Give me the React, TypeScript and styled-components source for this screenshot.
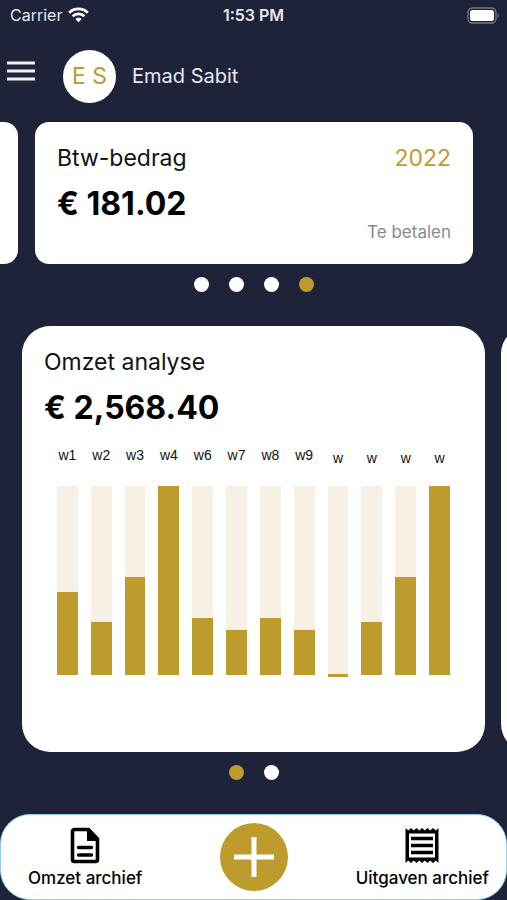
import React from "react";
import styled, { createGlobalStyle, css } from "styled-components";

const navy = "#1f233a";
const gold = "#be9b2d";
const cream = "#f7f0e5";

const GlobalStyle = createGlobalStyle`
  *, *::before, *::after { box-sizing: border-box; }
  body {
    margin: 0;
    background: ${navy};
    font-family: Inter, "Liberation Sans", sans-serif;
    color: #111;
  }
  button { font: inherit; padding: 0; border: 0; background: none; cursor: pointer; }
  h2, p, ul { margin: 0; padding: 0; }
`;

const Screen = styled.div`
  min-height: 100vh;
  display: flex;
  flex-direction: column;
  overflow: hidden;
`;

const StatusBar = styled.div`
  display: grid;
  grid-template-columns: 1fr auto 1fr;
  align-items: center;
  height: 30px;
  padding: 0 8px;
  font-size: 16px;
  line-height: 20px;
  color: #e6e8f0;
`;

const Carrier = styled.div`
  display: flex;
  align-items: center;
  gap: 6px;
  padding-left: 2px;
`;

const Clock = styled.time`
  font-weight: 600;
`;

const Battery = styled.svg`
  justify-self: end;
`;

const Header = styled.header`
  display: flex;
  align-items: center;
  height: 54px;
  margin-top: 19px;
  padding: 0 7px;
`;

const MenuButton = styled.button`
  display: flex;
  align-items: center;
  align-self: flex-start;
  height: 44px;
  margin-right: 28px;
`;

const Avatar = styled.div`
  display: grid;
  place-items: center;
  width: 53px;
  height: 53px;
  margin-right: 16px;
  border-radius: 50%;
  background: #fff;
  color: ${gold};
  font-size: 23px;
`;

const UserName = styled.span`
  color: #e6e8f0;
  font-size: 20px;
`;

const Main = styled.main`
  display: flex;
  flex-direction: column;
  gap: 21px;
  margin-top: 19px;
`;

const Carousel = styled.div<{ $end?: boolean }>`
  display: flex;
  gap: ${(p) => (p.$end ? 17 : 16)}px;
  justify-content: ${(p) => (p.$end ? "flex-end" : "flex-start")};
  padding: ${(p) => (p.$end ? "0 34px 0 35px" : "0 22px")};
  overflow: hidden;
`;

const cardBase = css`
  flex: 0 0 100%;
  background: #fff;
`;

const SummaryCard = styled.article`
  ${cardBase}
  display: flex;
  flex-direction: column;
  min-height: 142px;
  padding: 20px 22px 23px;
  border-radius: 14px;
`;

const ChartCard = styled.article`
  ${cardBase}
  min-height: 426px;
  padding: 20px 22px;
  border-radius: 28px;
`;

const CardHead = styled.div`
  display: flex;
  justify-content: space-between;
`;

const CardTitle = styled.h2`
  font-size: 23px;
  font-weight: 400;
  line-height: 32px;
`;

const Year = styled.span`
  color: ${gold};
  font-size: 23px;
  line-height: 32px;
`;

const Amount = styled.p`
  margin-top: 11px;
  font-size: 32px;
  font-weight: 700;
  line-height: 38px;
  color: #000;
`;

const Note = styled.p`
  align-self: flex-end;
  margin-top: auto;
  color: #8a8a8a;
  font-size: 17px;
  line-height: 18px;
`;

const Dots = styled.div`
  display: flex;
  justify-content: center;
  gap: 20px;
  padding: 13px 0;
`;

const Dot = styled.button<{ $active?: boolean }>`
  width: 15px;
  height: 15px;
  border-radius: 50%;
  background: ${(p) => (p.$active ? gold : "#fff")};
`;

const Chart = styled.ul`
  display: flex;
  gap: 13px;
  margin-top: 15px;
  padding: 0 13px;
  list-style: none;
`;

const Week = styled.li`
  flex: 1 1 0;
  min-width: 0;
  display: flex;
  flex-direction: column;
  align-items: center;
`;

const WeekLabel = styled.span<{ $low: boolean }>`
  height: 44px;
  padding-top: ${(p) => (p.$low ? 6 : 3)}px;
  font-family: "Liberation Sans", Arial, sans-serif;
  font-size: 14px;
  line-height: 20px;
`;

const Track = styled.div`
  width: 100%;
  height: 189px;
  display: flex;
  flex-direction: column;
  justify-content: flex-end;
  background: ${cream};
`;

const Fill = styled.div<{ $value: number }>`
  flex: none;
  height: ${(p) => (p.$value ? `${p.$value}%` : "3px")};
  margin-bottom: ${(p) => (p.$value ? 0 : -2)}px;
  background: ${gold};
`;

const BottomBar = styled.nav`
  display: grid;
  grid-template-columns: 1fr auto 1fr;
  align-items: center;
  min-height: 86px;
  margin-top: auto;
  padding: 0 17px;
  border: 1px solid #8fd0ea;
  border-radius: 30px;
  background: #fff;
`;

const NavLink = styled.a<{ $end?: boolean }>`
  display: flex;
  flex-direction: column;
  align-items: center;
  gap: 2px;
  justify-self: ${(p) => (p.$end ? "end" : "start")};
  padding: 2px 0 0 ${(p) => (p.$end ? 0 : 10)}px;
  color: #000;
  font-size: 17px;
  font-weight: 500;
  line-height: 24px;
  white-space: nowrap;
  text-decoration: none;
`;

const AddButton = styled.button`
  display: grid;
  place-items: center;
  width: 68px;
  height: 68px;
  border-radius: 50%;
  background: ${gold};
`;

const weeks = [
  { label: "w1", value: 44 },
  { label: "w2", value: 28 },
  { label: "w3", value: 52 },
  { label: "w4", value: 100 },
  { label: "w6", value: 30 },
  { label: "w7", value: 24 },
  { label: "w8", value: 30 },
  { label: "w9", value: 24 },
  { label: "w", value: 0 },
  { label: "w", value: 28 },
  { label: "w", value: 52 },
  { label: "w", value: 100 },
];

function WifiIcon() {
  return (
    <svg width="21" height="16" viewBox="0 0 21 16" fill="none" stroke="#fff" strokeWidth="2.7" aria-hidden="true">
      <path d="M1.2 5.7C6.4.6 14.6.6 19.8 5.7" />
      <path d="M4.6 9.3C7.9 6.1 13.1 6.1 16.4 9.3" />
      <path d="M10.5 15.3 7.3 12.1C9 10.4 12 10.4 13.7 12.1Z" fill="#fff" stroke="none" />
    </svg>
  );
}

function BatteryIcon() {
  return (
    <Battery width="33" height="17" viewBox="0 0 33 17" aria-hidden="true">
      <rect x="2" y="1" width="28" height="15" rx="4.5" fill="none" stroke="#777b8c" strokeWidth="1.3" />
      <rect x="4" y="3" width="24" height="11" rx="2.5" fill="#fff" />
      <path d="M31.500 6v5c1.600-.7 1.600-4.300 0-5Z" fill="#777b8c" />
    </Battery>
  );
}

function DocumentIcon() {
  return (
    <svg width="30" height="37" viewBox="0 0 30 37" aria-hidden="true">
      <path d="M4 2.5h14.5L27.5 12v20.5a2 2 0 0 1-2 2H4.5a2 2 0 0 1-2-2v-28a2 2 0 0 1 2-2Z" fill="none" stroke="#000" strokeWidth="3.6" />
      <path d="M17 2v12h11.5v-3L19 2Z" fill="#000" />
      <path d="M8.5 20.5h13M8.5 28h13" stroke="#000" strokeWidth="3.4" strokeLinecap="round" />
    </svg>
  );
}

function ReceiptIcon() {
  return (
    <svg width="34" height="37" viewBox="0 0 34 37" aria-hidden="true">
      <path
        fillRule="evenodd"
        d="M.5 1l2.75 2.5L6 1l2.75 2.5L11.5 1l2.75 2.5L17 1l2.75 2.5L22.5 1l2.75 2.5L28 1l2.75 2.5L33.5 1v35l-2.75-2.5L28 36l-2.75-2.5L22.5 36l-2.75-2.5L17 36l-2.75-2.5L11.5 36l-2.75-2.5L6 36l-2.75-2.5L.5 36ZM4 6.5v24h26v-24Z"
      />
      <path d="M6 11.5h22M6 18.5h22M6 25.5h22" stroke="#000" strokeWidth="3.4" />
    </svg>
  );
}

function Pager({ count, active, label }: { count: number; active: number; label: string }) {
  return (
    <Dots>
      {Array.from({ length: count }, (_, i) => (
        <Dot key={i} $active={i === active} aria-label={`${label} ${i + 1}`} />
      ))}
    </Dots>
  );
}

export default function App() {
  return (
    <>
      <GlobalStyle />
      <Screen>
        <StatusBar>
          <Carrier>
            Carrier
            <WifiIcon />
          </Carrier>
          <Clock>1:53 PM</Clock>
          <BatteryIcon />
        </StatusBar>

        <Header>
          <MenuButton aria-label="Menu">
            <svg width="28" height="20" viewBox="0 0 28 20" aria-hidden="true">
              <path d="M0 2h28M0 10h28M0 18h28" stroke="#eef0f6" strokeWidth="3" />
            </svg>
          </MenuButton>
          <Avatar>E S</Avatar>
          <UserName>Emad Sabit</UserName>
        </Header>

        <Main>
          <section>
            <Carousel $end>
              <SummaryCard aria-hidden="true" />
              <SummaryCard>
                <CardHead>
                  <CardTitle>Btw-bedrag</CardTitle>
                  <Year>2022</Year>
                </CardHead>
                <Amount>€ 181.02</Amount>
                <Note>Te betalen</Note>
              </SummaryCard>
            </Carousel>
            <Pager count={4} active={3} label="Overzicht" />
          </section>

          <section>
            <Carousel>
              <ChartCard>
                <CardTitle>Omzet analyse</CardTitle>
                <Amount>€ 2,568.40</Amount>
                <Chart>
                  {weeks.map((week, i) => (
                    <Week key={i}>
                      <WeekLabel $low={week.label === "w"}>{week.label}</WeekLabel>
                      <Track>
                        <Fill $value={week.value} />
                      </Track>
                    </Week>
                  ))}
                </Chart>
              </ChartCard>
              <ChartCard aria-hidden="true" />
            </Carousel>
            <Pager count={2} active={0} label="Grafiek" />
          </section>
        </Main>

        <BottomBar>
          <NavLink href="#omzet">
            <DocumentIcon />
            Omzet archief
          </NavLink>
          <AddButton aria-label="Toevoegen">
            <svg width="40" height="40" viewBox="0 0 40 40" aria-hidden="true">
              <path d="M20 0v40M0 20h40" stroke="#fff" strokeWidth="5" />
            </svg>
          </AddButton>
          <NavLink href="#uitgaven" $end>
            <ReceiptIcon />
            Uitgaven archief
          </NavLink>
        </BottomBar>
      </Screen>
    </>
  );
}
